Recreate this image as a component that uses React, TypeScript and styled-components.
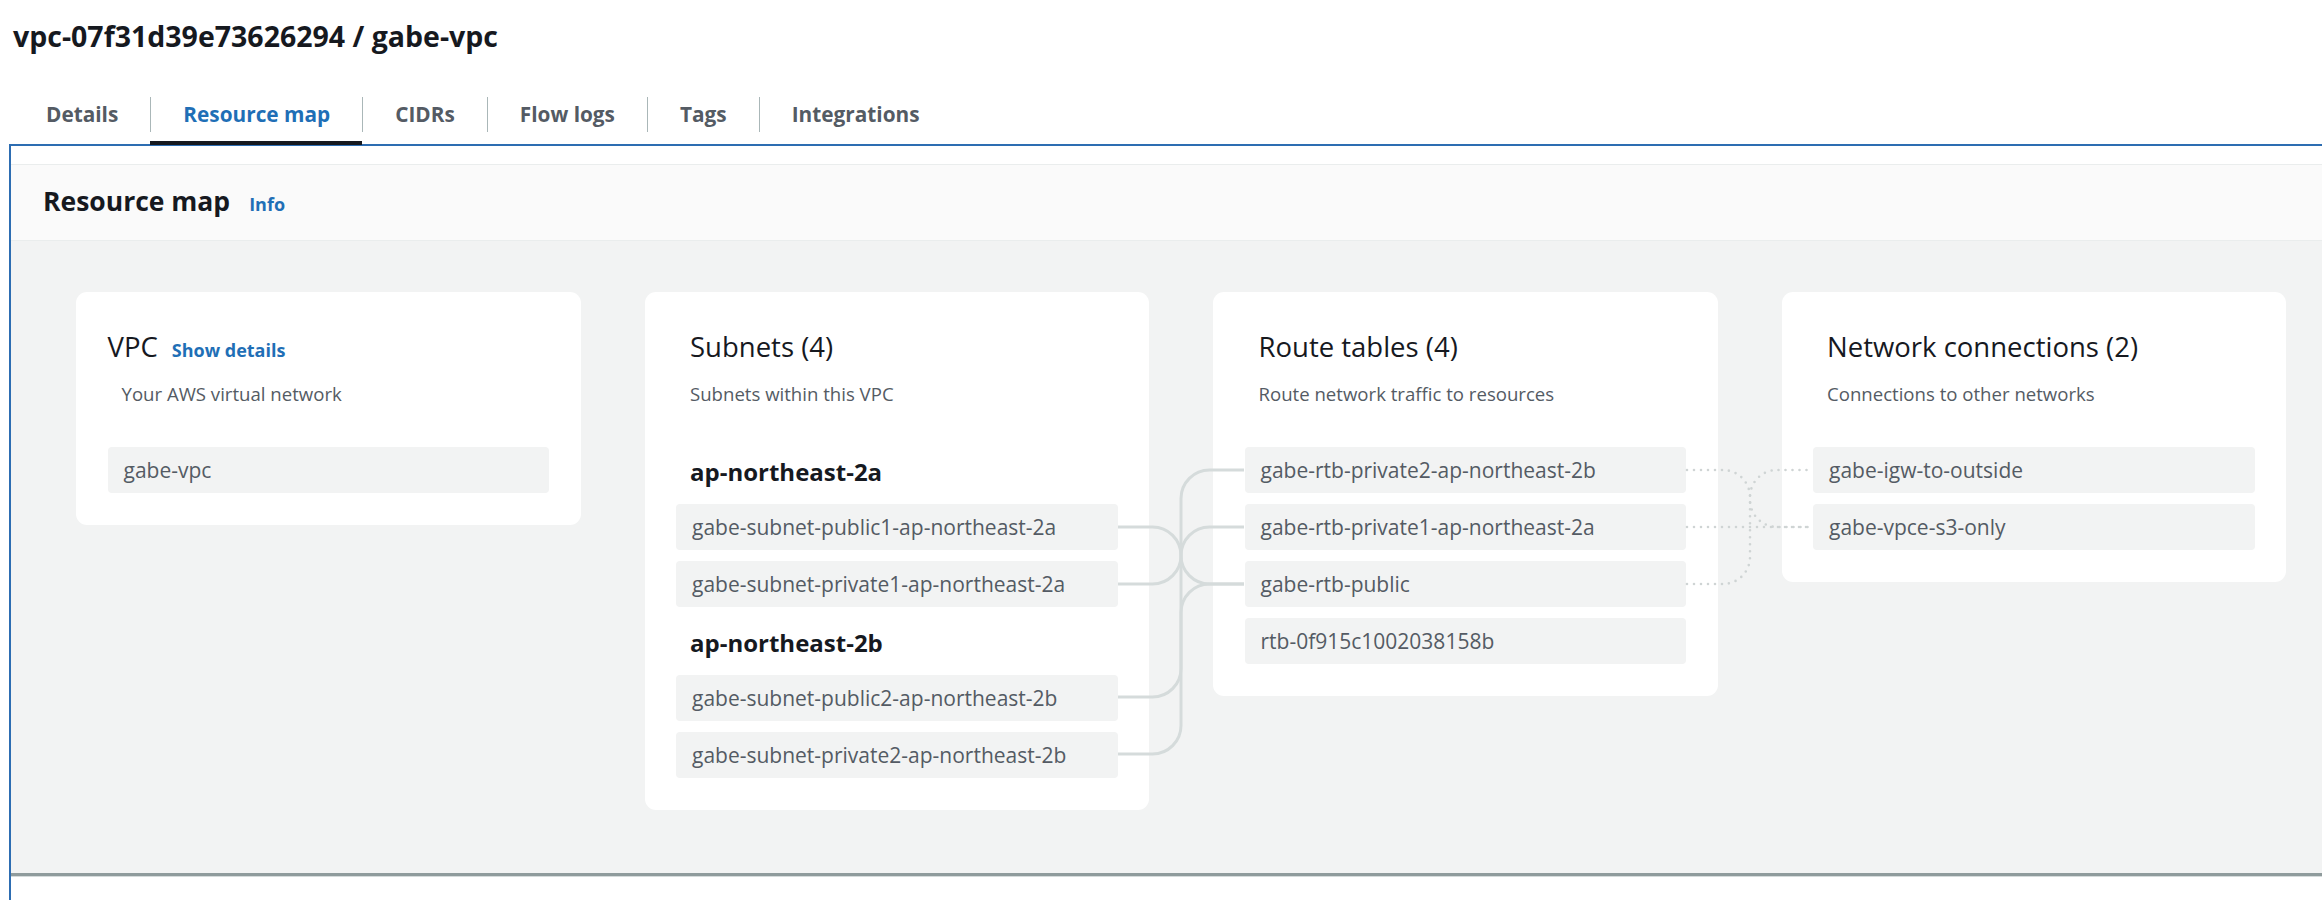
import React from "react";
import styled, { createGlobalStyle } from "styled-components";

const GlobalStyle = createGlobalStyle`
  html, body { margin: 0; padding: 0; background: #ffffff; overflow: hidden; }
  body { font-family: "Open Sans", "Noto Sans", sans-serif; color: #16191f; }
  *, *::before, *::after { box-sizing: border-box; }
`;

const BLUE = "#1f6fb6";

const Page = styled.div`
  width: 2322px;
  height: 900px;
  overflow: hidden;
  padding-left: 9px;
`;

const PageTitle = styled.h1`
  margin: 19px 0 0 4px;
  font-size: 28.5px;
  line-height: 34px;
  font-weight: 700;
  color: #16191f;
  white-space: nowrap;
`;

const TabList = styled.div`
  display: flex;
  margin: 36px 0 0 5px;
`;

const Tab = styled.div<{ $active?: boolean }>`
  padding-top: 8px;
  padding-bottom: 9px;
  border-bottom: 4px solid ${(p) => (p.$active ? "#16191f" : "transparent")};
`;

const TabLabel = styled.span<{ $active?: boolean; $first?: boolean }>`
  display: block;
  height: 35px;
  line-height: 35px;
  padding: 0 32px;
  border-left: ${(p) => (p.$first ? "none" : "1px solid #aab7b8")};
  font-size: 20.8px;
  font-weight: 700;
  white-space: nowrap;
  color: ${(p) => (p.$active ? BLUE : "#545b64")};
`;

const Panel = styled.div`
  margin-top: -1px;
  border-top: 2px solid #2d6db2;
  border-left: 2px solid #2d6db2;
  padding-top: 18px;
  height: 800px;
  background: #ffffff;
`;

const PanelHeader = styled.div`
  display: flex;
  align-items: baseline;
  gap: 19px;
  background: #fafafa;
  border-top: 1px solid #eaeded;
  border-bottom: 1px solid #eaeded;
  padding: 19px 32px 22px;
`;

const PanelTitle = styled.h2`
  margin: 0;
  font-size: 26.5px;
  line-height: 34px;
  font-weight: 700;
  color: #16191f;
`;

const InfoLink = styled.span`
  font-size: 18px;
  font-weight: 700;
  color: ${BLUE};
`;

const MapArea = styled.div`
  display: flex;
  align-items: flex-start;
  height: 635px;
  padding: 51px 0 0 65px;
  background: #f2f3f3;
  border-bottom: 3px solid #8f9b9c;
  box-shadow: 0 1px 0 #d5dbdb;
`;

const Card = styled.section`
  flex-shrink: 0;
  width: 504.5px;
  padding: 32px 31.5px;
  background: #ffffff;
  border-radius: 11px;
`;

const TitleRow = styled.div<{ $inset?: boolean }>`
  display: flex;
  align-items: baseline;
  gap: 14px;
  margin-top: 5.5px;
  padding-left: ${(p) => (p.$inset ? "14px" : "0")};
`;

const CardTitle = styled.h3`
  margin: 0;
  font-size: 27.5px;
  line-height: 34px;
  font-weight: 400;
  color: #16191f;
  white-space: nowrap;
`;

const DetailsLink = styled.span`
  font-size: 18px;
  font-weight: 700;
  color: ${BLUE};
`;

const CardDescription = styled.p`
  margin: 16px 0 0;
  padding-left: 14px;
  font-size: 18.6px;
  line-height: 28px;
  color: #545b64;
  white-space: nowrap;
`;

const ItemList = styled.div`
  display: flex;
  flex-direction: column;
  gap: 11px;
  margin-top: 39.5px;
`;

const ZoneHeading = styled.h4`
  margin: 10px 0 6px;
  padding-left: 14px;
  font-size: 24px;
  line-height: 30px;
  font-weight: 700;
  color: #16191f;
`;

const ZoneGroup = styled.div`
  display: flex;
  flex-direction: column;
  gap: 11px;
`;

const Pill = styled.div`
  height: 46px;
  padding: 0 16px;
  border-radius: 4px;
  background: #f2f3f3;
  font-size: 21px;
  line-height: 46px;
  color: #545b64;
  white-space: nowrap;
  overflow: hidden;
`;

const Spacer = styled.div`
  flex-shrink: 0;
  width: 64px;
`;

const LinkColumn = styled.div`
  position: relative;
  flex-shrink: 0;
  width: 64px;
  align-self: stretch;
`;

const LinkSvg = styled.svg`
  position: absolute;
  left: -31px;
  top: 0;
  overflow: visible;
`;

const SolidPath = styled.path`
  fill: none;
  stroke: #d5dbdb;
  stroke-width: 3;
`;

const DottedPath = styled.path`
  fill: none;
  stroke: #cfd4d4;
  stroke-width: 2.6;
  stroke-linecap: round;
  stroke-dasharray: 0 7;
`;

const TRUNK = 63;
const SPAN = 126;

function linkPath(y1: number, y2: number, r: number): string {
  if (y1 === y2) return `M0 ${y1} H${SPAN}`;
  const rr = Math.min(r, Math.abs(y2 - y1) / 2);
  if (y2 > y1) {
    return `M0 ${y1} H${TRUNK - rr} A${rr} ${rr} 0 0 1 ${TRUNK} ${y1 + rr} V${y2 - rr} A${rr} ${rr} 0 0 0 ${TRUNK + rr} ${y2} H${SPAN}`;
  }
  return `M0 ${y1} H${TRUNK - rr} A${rr} ${rr} 0 0 0 ${TRUNK} ${y1 - rr} V${y2 + rr} A${rr} ${rr} 0 0 1 ${TRUNK + rr} ${y2} H${SPAN}`;
}

const tabs = ["Details", "Resource map", "CIDRs", "Flow logs", "Tags", "Integrations"];

const zones = [
  {
    name: "ap-northeast-2a",
    subnets: ["gabe-subnet-public1-ap-northeast-2a", "gabe-subnet-private1-ap-northeast-2a"],
  },
  {
    name: "ap-northeast-2b",
    subnets: ["gabe-subnet-public2-ap-northeast-2b", "gabe-subnet-private2-ap-northeast-2b"],
  },
];

const routeTables = [
  "gabe-rtb-private2-ap-northeast-2b",
  "gabe-rtb-private1-ap-northeast-2a",
  "gabe-rtb-public",
  "rtb-0f915c1002038158b",
];

const connections = ["gabe-igw-to-outside", "gabe-vpce-s3-only"];

// vertical centers of rows, relative to the top of the cards
const subnetY = [235, 292, 405, 462];
const routeY = [178, 235, 292, 349];
const connY = [178, 235];

const subnetLinks: [number, number][] = [
  [subnetY[0], routeY[2]],
  [subnetY[1], routeY[1]],
  [subnetY[2], routeY[2]],
  [subnetY[3], routeY[0]],
];

const routeLinks: [number, number][] = [
  [routeY[0], connY[1]],
  [routeY[1], connY[1]],
  [routeY[2], connY[0]],
];

export default function App() {
  return (
    <>
      <GlobalStyle />
      <Page>
        <PageTitle>vpc-07f31d39e73626294 / gabe-vpc</PageTitle>
        <TabList>
          {tabs.map((t, i) => (
            <Tab key={t} $active={t === "Resource map"}>
              <TabLabel $first={i === 0} $active={t === "Resource map"}>
                {t}
              </TabLabel>
            </Tab>
          ))}
        </TabList>
        <Panel>
          <PanelHeader>
            <PanelTitle>Resource map</PanelTitle>
            <InfoLink>Info</InfoLink>
          </PanelHeader>
          <MapArea>
            <Card>
              <TitleRow>
                <CardTitle>VPC</CardTitle>
                <DetailsLink>Show details</DetailsLink>
              </TitleRow>
              <CardDescription>Your AWS virtual network</CardDescription>
              <ItemList>
                <Pill>gabe-vpc</Pill>
              </ItemList>
            </Card>
            <Spacer />
            <Card>
              <TitleRow $inset>
                <CardTitle>Subnets (4)</CardTitle>
              </TitleRow>
              <CardDescription>Subnets within this VPC</CardDescription>
              <ItemList>
                {zones.map((z) => (
                  <ZoneGroup key={z.name}>
                    <ZoneHeading>{z.name}</ZoneHeading>
                    {z.subnets.map((s) => (
                      <Pill key={s}>{s}</Pill>
                    ))}
                  </ZoneGroup>
                ))}
              </ItemList>
            </Card>
            <LinkColumn>
              <LinkSvg width={SPAN} height={500} viewBox={`0 0 ${SPAN} 500`}>
                {subnetLinks.map(([a, b], i) => (
                  <SolidPath key={i} d={linkPath(a, b, 28.5)} />
                ))}
              </LinkSvg>
            </LinkColumn>
            <Card>
              <TitleRow $inset>
                <CardTitle>Route tables (4)</CardTitle>
              </TitleRow>
              <CardDescription>Route network traffic to resources</CardDescription>
              <ItemList>
                {routeTables.map((r) => (
                  <Pill key={r}>{r}</Pill>
                ))}
              </ItemList>
            </Card>
            <LinkColumn>
              <LinkSvg width={SPAN} height={500} viewBox={`0 0 ${SPAN} 500`}>
                {routeLinks.map(([a, b], i) => (
                  <DottedPath key={i} d={linkPath(a, b, 27)} />
                ))}
              </LinkSvg>
            </LinkColumn>
            <Card>
              <TitleRow $inset>
                <CardTitle>Network connections (2)</CardTitle>
              </TitleRow>
              <CardDescription>Connections to other networks</CardDescription>
              <ItemList>
                {connections.map((c) => (
                  <Pill key={c}>{c}</Pill>
                ))}
              </ItemList>
            </Card>
          </MapArea>
        </Panel>
      </Page>
    </>
  );
}
